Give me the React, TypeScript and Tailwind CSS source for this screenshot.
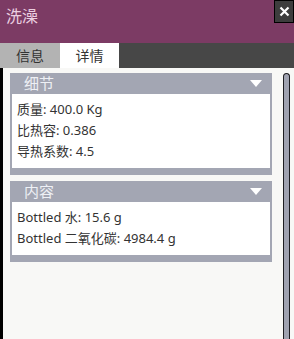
const font = { fontFamily: '"Noto Sans", "Noto Sans CJK SC", sans-serif' };

type Section = { title: string; rows: string[] };

const sections: Section[] = [
  { title: "细节", rows: ["质量: 400.0 Kg", "比热容: 0.386", "导热系数: 4.5"] },
  { title: "内容", rows: ["Bottled 水: 15.6 g", "Bottled 二氧化碳: 4984.4 g"] },
];

function Panel({ section }: { section: Section }) {
  return (
    <div className="w-[262px] bg-[#a3a6b3] px-[2px] pb-[7px]">
      <div className="flex h-[21px] items-center justify-between pl-[12px] pr-[8px]">
        <span className="text-[15px] leading-none text-[#eef0f5]">{section.title}</span>
        <svg width="12" height="7" viewBox="0 0 12 7">
          <polygon points="0,0 12,0 6,7" fill="#ffffff" />
        </svg>
      </div>
      <div className="bg-white pb-[6px] pl-[5px] pt-[5px]">
        {section.rows.map((row) => (
          <div key={row} className="text-[13px] leading-[21px] text-[#333333]">
            {row}
          </div>
        ))}
      </div>
    </div>
  );
}

export default function App() {
  return (
    <div className="flex h-[339px] w-[294px] flex-col overflow-hidden" style={font}>
      <div className="flex h-[43px] shrink-0 items-start justify-between bg-[#7c3b64]">
        <span className="pl-[6px] pt-[5px] text-[16px] leading-[22px] text-[#ebcfe0]">洗澡</span>
        <div className="flex h-[23px] w-[20px] items-center justify-center border border-black bg-[#3d3d3d]">
          <svg width="11" height="11" viewBox="0 0 11 11">
            <path d="M1.5 1.5 L9.5 9.5 M9.5 1.5 L1.5 9.5" stroke="#ffffff" strokeWidth="2.2" />
          </svg>
        </div>
      </div>
      <div className="flex h-[25px] shrink-0 bg-[#474747]">
        <div className="flex w-[60px] items-center justify-center bg-[#b3b3b3] text-[14px] text-[#333333]">信息</div>
        <div className="flex w-[59px] items-center justify-center bg-white text-[14px] text-[#333333]">详情</div>
      </div>
      <div className="flex min-h-0 flex-1 border-l-[3px] border-black bg-[#f8f8f6]">
        <div className="flex flex-col gap-[6px] pl-[7px] pt-[5px]">
          {sections.map((s) => (
            <Panel key={s.title} section={s} />
          ))}
        </div>
        <div className="ml-[11px] mt-[5px] w-[7px] self-stretch rounded-t-full border-[1.5px] border-b-0 border-[#1e1e22] bg-[#a0a3b1]" />
      </div>
    </div>
  );
}
